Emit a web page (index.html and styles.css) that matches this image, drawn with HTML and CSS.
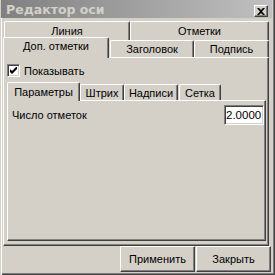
FILE: index.html
```html
<!doctype html>
<html>
<head>
	<meta charset="utf-8">
	<title>Редактор оси</title>
	<link rel="stylesheet" href="styles.css">
</head>
<body>
	<!-- окно -->
	<div class="window">
		<!-- заголовок окна -->
		<div class="titlebar">
			<span class="title">Редактор оси</span>
			<span class="close">
				<svg width="8" height="7" viewBox="0 0 8 7"><path d="M0 0h2l2 2 2-2h2L5 3.5 8 7H6L4 5 2 7H0l3-3.5z" fill="#000"/></svg>
			</span>
		</div>
		<div class="content">
			<!-- внешние вкладки -->
			<div class="tabctl outer">
				<div class="tabrow row-back">
					<div class="tab t-line">Линия</div>
					<div class="tab t-marks">Отметки</div>
				</div>
				<div class="tabrow row-front">
					<div class="tab sel t-extra">Доп. отметки</div>
					<div class="tab t-head">Заголовок</div>
					<div class="tab t-sign">Подпись</div>
				</div>
				<div class="panel outer-panel">
					<label class="check">
						<span class="box">
							<svg width="7" height="7" viewBox="0 0 7 7"><path d="M0 2v3l2 2 5-5V-1L2 4z" fill="#000"/></svg>
						</span>
						<span class="check-text">Показывать</span>
					</label>
					<!-- внутренние вкладки -->
					<div class="tabctl inner">
						<div class="tabrow inner-row">
							<div class="tab sel t-params">Параметры</div>
							<div class="tab t-stroke">Штрих</div>
							<div class="tab t-labels">Надписи</div>
							<div class="tab t-grid">Сетка</div>
						</div>
						<div class="panel inner-panel">
							<div class="field">
								<span>Число отметок</span>
								<span class="input">2.0000</span>
							</div>
						</div>
					</div>
				</div>
			</div>
			<!-- кнопки -->
			<div class="buttons">
				<button class="btn">Применить</button>
				<button class="btn">Закрыть</button>
			</div>
		</div>
	</div>
</body>
</html>
```

FILE: styles.css
```css
body{margin:0;}
.window{
	width:275px;
	height:275px;
	box-sizing:border-box;
	background-color:#d4d0c8;
	padding:0 3px 3px 2px;
	display:flex;
	flex-direction:column;
	font-family:"Liberation Sans",Arial,sans-serif;
	font-size:11px;
	color:#000;
	box-shadow:inset 1px 0 #d4d0c8,inset 2px 0 #fff,inset -1px -1px #404040,inset -2px -2px #808080;
}
/* заголовок окна */
.titlebar{
	height:18px;
	box-sizing:border-box;
	padding:3px 0 0 5px;
	margin-left:-1px;
	display:flex;
	justify-content:space-between;
	align-items:flex-start;
	background:linear-gradient(to right,#808080,#c0c0c0);
}
.title{
	font-family:"DejaVu Sans",sans-serif;
	font-weight:bold;
	font-size:12.5px;
	line-height:14px;
	color:#d4d0c8;
}
.close{
	width:14px;
	height:12px;
	box-sizing:border-box;
	margin:2px 4px 0 0;
	display:flex;
	align-items:center;
	justify-content:center;
	background-color:#d4d0c8;
	border-top:1px solid #fff;
	border-left:1px solid #fff;
	border-right:1px solid #404040;
	border-bottom:1px solid #404040;
	box-shadow:inset -1px -1px #808080;
}
.close svg{display:block;}
.content{
	flex:1;
	display:flex;
	flex-direction:column;
	padding-top:3px;
}
/* вкладки */
.tabrow{display:flex;}
.tab{
	box-sizing:border-box;
	text-align:center;
	line-height:13px;
	background-color:#d4d0c8;
	border-top:1px solid #fff;
	border-left:1px solid #fff;
	border-right:1px solid #404040;
	border-top-left-radius:2px;
	border-top-right-radius:2px;
	box-shadow:inset -1px 0 #808080;
	white-space:nowrap;
}
.tab.sel{position:relative;z-index:1;}
.outer{margin-left:1px;width:266px;}
.row-back{height:19px;padding-left:1px;}
.row-back .tab{height:19px;padding-top:3px;}
.t-line{width:126px;}
.t-marks{width:139px;}
.row-front{height:17px;align-items:flex-end;}
.row-front .tab{height:17px;padding-top:2px;}
.row-front .tab.sel{height:21px;margin-bottom:-1px;padding-top:2px;}
.t-extra{width:106px;}
.t-head{width:84px;margin-left:1px;}
.t-sign{width:75px;}
/* панели */
.panel{
	box-sizing:border-box;
	border-top:1px solid #fff;
	border-left:1px solid #fff;
	border-right:1px solid #404040;
	border-bottom:1px solid #404040;
	box-shadow:inset -1px -1px #808080;
}
.outer-panel{height:189px;padding:6px 0 0 3px;}
.check{display:flex;height:13px;}
.box{
	width:13px;
	height:13px;
	box-sizing:border-box;
	background-color:#fff;
	border-top:1px solid #808080;
	border-left:1px solid #808080;
	border-right:1px solid #fff;
	border-bottom:1px solid #fff;
	box-shadow:inset 1px 1px #404040,inset -1px -1px #d4d0c8;
	display:flex;
	align-items:center;
	justify-content:center;
}
.box svg{display:block;}
.check-text{margin-left:4px;line-height:13px;padding-top:1px;}
.inner{margin-top:5px;width:259px;}
.inner-row{height:18px;align-items:flex-end;}
.inner-row .tab{height:16px;padding-top:2px;}
.inner-row .tab.sel{height:19px;margin-bottom:-1px;padding-top:3px;}
.t-params{width:73px;}
.t-stroke{width:44px;}
.t-labels{width:54px;}
.t-grid{width:42px;margin-left:1px;}
.inner-panel{height:141px;padding:4px 1px 0 4px;}
.field{display:flex;justify-content:space-between;align-items:center;height:20px;}
.input{
	width:40px;
	height:20px;
	box-sizing:border-box;
	background-color:#fff;
	border-top:1px solid #808080;
	border-left:1px solid #808080;
	border-right:1px solid #fff;
	border-bottom:1px solid #fff;
	box-shadow:inset 1px 1px #404040,inset -1px -1px #d4d0c8;
	font-size:11.5px;
	line-height:18px;
	padding-left:1px;
	white-space:nowrap;
	overflow:hidden;
}
/* кнопки */
.buttons{display:flex;justify-content:flex-end;gap:1px;padding-right:1px;}
.btn{
	width:75px;
	height:26px;
	box-sizing:border-box;
	padding:0;
	font-family:"Liberation Sans",Arial,sans-serif;
	font-size:11px;
	color:#000;
	background-color:#d4d0c8;
	border-top:1px solid #fff;
	border-left:1px solid #fff;
	border-right:1px solid #404040;
	border-bottom:1px solid #404040;
	box-shadow:inset -1px -1px #808080;
}
```
